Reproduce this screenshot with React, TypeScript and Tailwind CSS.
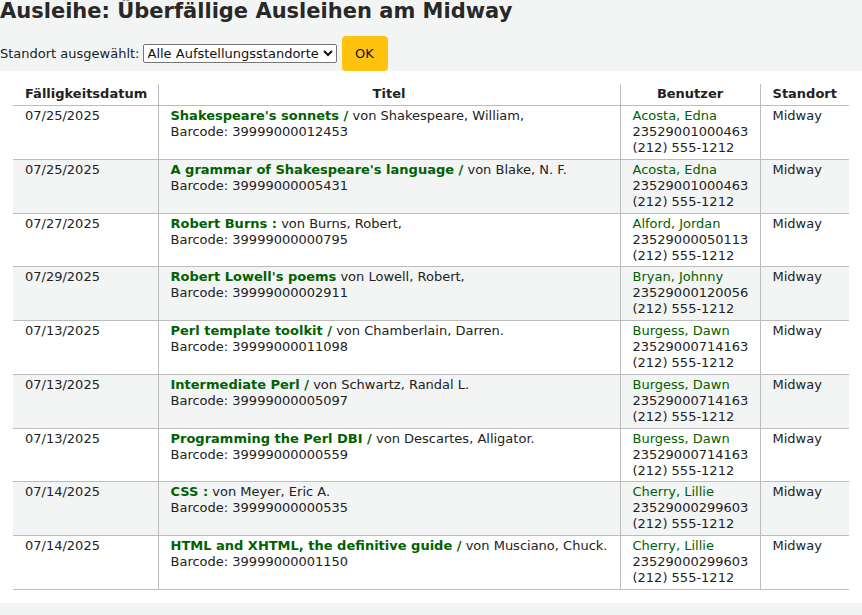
import React from 'react';

const ROWS = [
  { date: '07/25/2025', title: "Shakespeare's sonnets /", author: 'von Shakespeare, William,', barcode: '39999000012453', user: 'Acosta, Edna', card: '23529001000463' },
  { date: '07/25/2025', title: "A grammar of Shakespeare's language /", author: 'von Blake, N. F.', barcode: '39999000005431', user: 'Acosta, Edna', card: '23529001000463' },
  { date: '07/27/2025', title: 'Robert Burns :', author: 'von Burns, Robert,', barcode: '39999000000795', user: 'Alford, Jordan', card: '23529000050113' },
  { date: '07/29/2025', title: "Robert Lowell's poems", author: 'von Lowell, Robert,', barcode: '39999000002911', user: 'Bryan, Johnny', card: '23529000120056' },
  { date: '07/13/2025', title: 'Perl template toolkit /', author: 'von Chamberlain, Darren.', barcode: '39999000011098', user: 'Burgess, Dawn', card: '23529000714163' },
  { date: '07/13/2025', title: 'Intermediate Perl /', author: 'von Schwartz, Randal L.', barcode: '39999000005097', user: 'Burgess, Dawn', card: '23529000714163' },
  { date: '07/13/2025', title: 'Programming the Perl DBI /', author: 'von Descartes, Alligator.', barcode: '39999000000559', user: 'Burgess, Dawn', card: '23529000714163' },
  { date: '07/14/2025', title: 'CSS :', author: 'von Meyer, Eric A.', barcode: '39999000000535', user: 'Cherry, Lillie', card: '23529000299603' },
  { date: '07/14/2025', title: 'HTML and XHTML, the definitive guide /', author: 'von Musciano, Chuck.', barcode: '39999000001150', user: 'Cherry, Lillie', card: '23529000299603' },
];

export default function App() {
  return (
    <div className="bg-[#f3f4f4] text-[13px] text-[#222] pb-[13px]" style={{ fontFamily: '"DejaVu Sans", sans-serif' }}>
      <h1 className="text-[21px] leading-[22px] font-bold text-[#282828]">Ausleihe: Überfällige Ausleihen am Midway</h1>

      <div className="flex items-center mt-[14px]">
        <label className="leading-4 mr-[3px]">Standort ausgewählt:</label>
        <select className="w-[194px] h-[19px] border border-[#767676] rounded-[2px] bg-white text-[13px] leading-4 text-[#111]">
          <option>Alle Aufstellungsstandorte</option>
        </select>
        <button className="ml-[5px] w-[46px] h-[35px] rounded-[4px] bg-[#ffc20e] text-[#111] text-[13px]">OK</button>
      </div>

      {/* Results */}
      <div className="bg-white px-[13px] py-[13px]">
        <table className="w-full table-fixed border-collapse">
          <colgroup>
            <col className="w-[145px]" />
            <col className="w-[462px]" />
            <col className="w-[140px]" />
            <col className="w-[89px]" />
          </colgroup>
          <thead>
            <tr className="border-b border-[#bcbcbc]">
              <th className="px-3 pt-[2px] pb-[3px] leading-4 font-bold text-center border-r border-[#bcbcbc]">Fälligkeitsdatum</th>
              <th className="px-3 pt-[2px] pb-[3px] leading-4 font-bold text-center border-r border-[#bcbcbc]">Titel</th>
              <th className="px-3 pt-[2px] pb-[3px] leading-4 font-bold text-center border-r border-[#bcbcbc]">Benutzer</th>
              <th className="px-3 pt-[2px] pb-[3px] leading-4 font-bold text-center">Standort</th>
            </tr>
          </thead>
          <tbody>
            {ROWS.map((r, i) => (
              <tr key={i} className={`border-b border-[#bcbcbc] align-top ${i % 2 === 1 ? 'bg-[#f3f4f4]' : 'bg-white'}`}>
                <td className="px-3 pt-[2px] pb-[2.75px] leading-4 border-r border-[#bcbcbc]">{r.date}</td>
                <td className="px-3 pt-[2px] pb-[2.75px] leading-4 border-r border-[#bcbcbc]">
                  <span className="font-bold text-[#006100]">{r.title}</span> {r.author}
                  <br />
                  Barcode: {r.barcode}
                </td>
                <td className="px-3 pt-[2px] pb-[2.75px] leading-4 border-r border-[#bcbcbc]">
                  <span className="text-[#006100]">{r.user}</span>
                  <br />
                  {r.card}
                  <br />
                  (212) 555-1212
                </td>
                <td className="px-3 pt-[2px] pb-[2.75px] leading-4">Midway</td>
              </tr>
            ))}
          </tbody>
        </table>
      </div>
    </div>
  );
}
